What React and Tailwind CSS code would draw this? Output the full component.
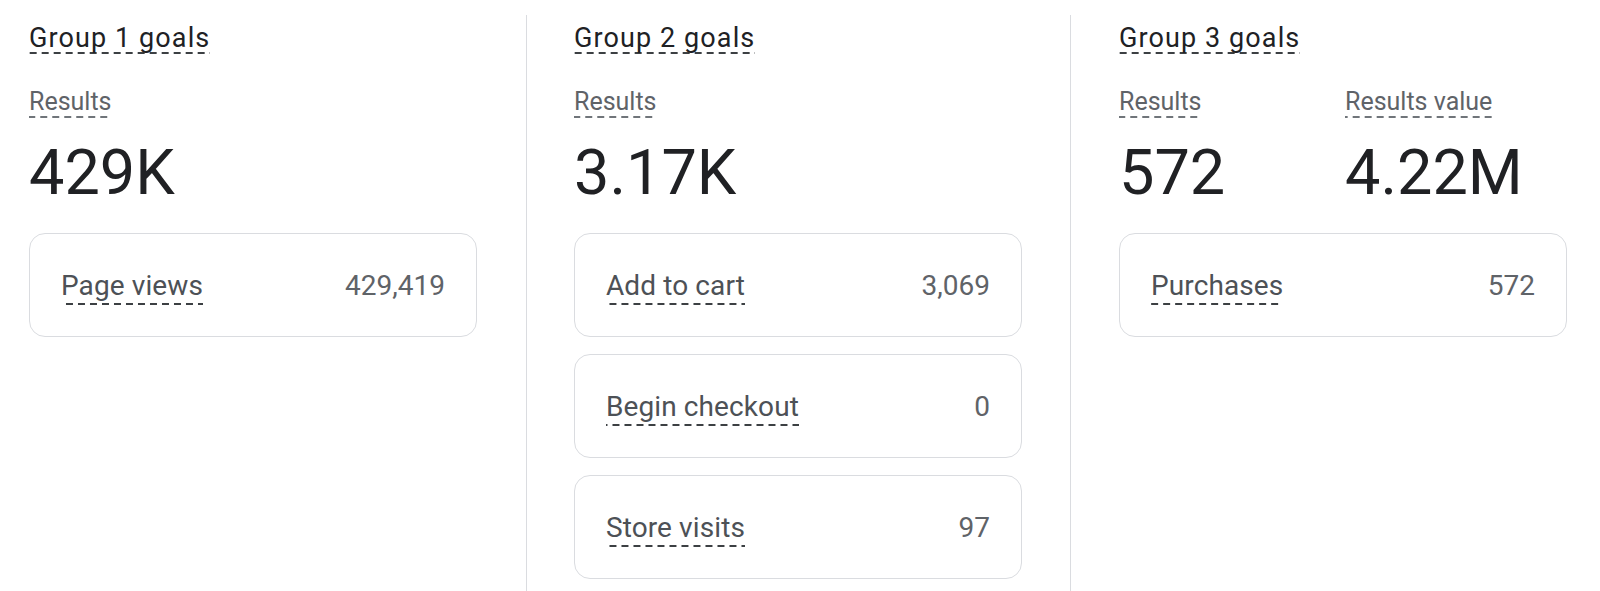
import React from "react";

const dashDark =
  "bg-[linear-gradient(to_right,#3c4043_62%,transparent_62%)] bg-[length:12px_2px] bg-repeat-x bg-bottom";
const dashGray =
  "bg-[linear-gradient(to_right,#70757a_62%,transparent_62%)] bg-[length:12px_2px] bg-repeat-x bg-bottom";

function Title({ children }) {
  return (
    <div>
      <span
        className={`inline-block text-[27px] leading-[32px] pt-[1px] tracking-[1.1px] text-[#202124] ${dashDark}`}
      >
        {children}
      </span>
    </div>
  );
}

function Stat({ label, value, className = "" }) {
  return (
    <div className={`flex flex-col ${className}`}>
      <div className="mt-[34px]">
        <span className={`inline-block text-[25px] leading-[28px] pb-[2px] text-[#5f6368] ${dashGray}`}>
          {label}
        </span>
      </div>
      <div className="mt-[18px] text-[63px] leading-[74px] text-[#202124]">{value}</div>
    </div>
  );
}

function Card({ label, value }) {
  return (
    <div className="h-[104px] border border-[#dadce0] rounded-[16px] px-[31px] flex items-center justify-between">
      <span className={`inline-block text-[28px] leading-[32px] pt-[4px] pb-[3px] tracking-[0.1px] text-[#4d5156] ${dashDark}`}>
        {label}
      </span>
      <span className="inline-block text-[28px] leading-[32px] pt-[4px] pb-[3px] text-[#5f6368]">{value}</span>
    </div>
  );
}

function Column({ title, stats, cards, className = "" }) {
  return (
    <div className={`w-[448px] shrink-0 flex flex-col ${className}`}>
      <Title>{title}</Title>
      <div className="flex">
        {stats.map((s, i) => (
          <Stat
            key={s.label}
            label={s.label}
            value={s.value}
            className={i < stats.length - 1 ? "w-[226px] shrink-0" : ""}
          />
        ))}
      </div>
      <div className="mt-[23px] flex flex-col gap-[17px]">
        {cards.map((c) => (
          <Card key={c.label} label={c.label} value={c.value} />
        ))}
      </div>
    </div>
  );
}

export default function App() {
  return (
    <div className="w-[1600px] h-[591px] overflow-hidden bg-white flex font-['Roboto','Liberation_Sans',sans-serif]">
      <div className="pl-[29px] pr-[49px] pt-[21px]">
        <Column
          title="Group 1 goals"
          stats={[{ label: "Results", value: "429K" }]}
          cards={[{ label: "Page views", value: "429,419" }]}
        />
      </div>
      <div className="mt-[15px] border-l border-[#dadce0] pl-[47px] pr-[48px] pt-[6px]">
        <Column
          title="Group 2 goals"
          stats={[{ label: "Results", value: "3.17K" }]}
          cards={[
            { label: "Add to cart", value: "3,069" },
            { label: "Begin checkout", value: "0" },
            { label: "Store visits", value: "97" },
          ]}
        />
      </div>
      <div className="mt-[15px] border-l border-[#dadce0] pl-[48px] pt-[6px]">
        <Column
          title="Group 3 goals"
          stats={[
            { label: "Results", value: "572" },
            { label: "Results value", value: "4.22M" },
          ]}
          cards={[{ label: "Purchases", value: "572" }]}
        />
      </div>
    </div>
  );
}
